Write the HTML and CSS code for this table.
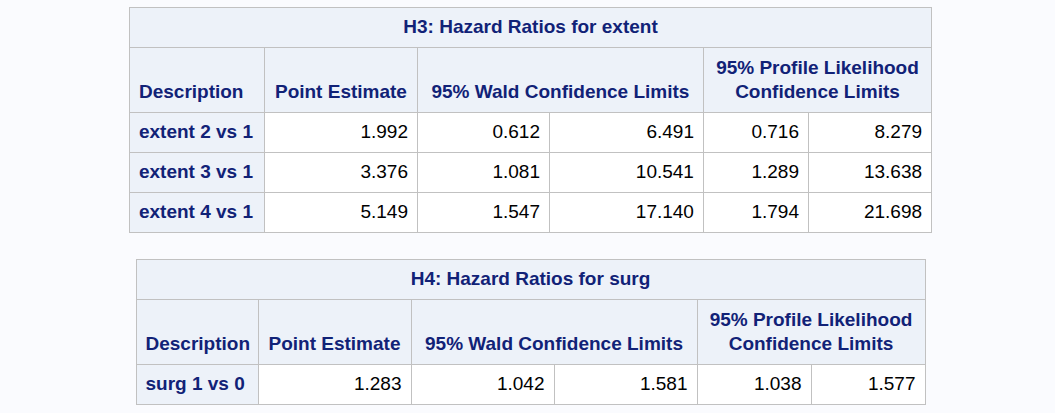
FILE: index.html
```html
<!DOCTYPE html>
<html>
<head>
<meta charset="utf-8">
<link rel="stylesheet" href="styles.css">
</head>
<body>
<div class="page">
  <table class="hr hr-extent">
    <colgroup>
      <col class="c-desc"><col class="c-pe"><col class="c-wl"><col class="c-wu"><col class="c-pl"><col class="c-pu">
    </colgroup>
    <thead>
      <tr><th class="title" colspan="6">H3: Hazard Ratios for extent</th></tr>
      <tr class="heads">
        <th class="left">Description</th>
        <th>Point Estimate</th>
        <th colspan="2">95% Wald Confidence Limits</th>
        <th colspan="2">95% Profile Likelihood<br>Confidence Limits</th>
      </tr>
    </thead>
    <tbody>
      <tr><th class="rowh">extent 2 vs 1</th><td>1.992</td><td>0.612</td><td>6.491</td><td>0.716</td><td>8.279</td></tr>
      <tr><th class="rowh">extent 3 vs 1</th><td>3.376</td><td>1.081</td><td>10.541</td><td>1.289</td><td>13.638</td></tr>
      <tr class="last"><th class="rowh">extent 4 vs 1</th><td>5.149</td><td>1.547</td><td>17.140</td><td>1.794</td><td>21.698</td></tr>
    </tbody>
  </table>

  <table class="hr hr-surg">
    <colgroup>
      <col class="c-desc"><col class="c-pe"><col class="c-wl"><col class="c-wu"><col class="c-pl"><col class="c-pu">
    </colgroup>
    <thead>
      <tr><th class="title" colspan="6">H4: Hazard Ratios for surg</th></tr>
      <tr class="heads">
        <th class="left">Description</th>
        <th>Point Estimate</th>
        <th colspan="2">95% Wald Confidence Limits</th>
        <th colspan="2">95% Profile Likelihood<br>Confidence Limits</th>
      </tr>
    </thead>
    <tbody>
      <tr><th class="rowh">surg 1 vs 0</th><td>1.283</td><td>1.042</td><td>1.581</td><td>1.038</td><td>1.577</td></tr>
    </tbody>
  </table>
</div>
</body>
</html>
```

FILE: styles.css
```css
html, body {
  margin: 0;
  padding: 0;
  background: #fafbfe;
}

.page {
  display: flex;
  flex-direction: column;
  align-items: center;
  gap: 26px;
  padding: 7px 0 0 6px;
  font-family: "Liberation Sans", Arial, sans-serif;
  font-size: 19px;
  line-height: 24px;
}

.hr {
  border-collapse: collapse;
  table-layout: fixed;
  border: 1px solid #c1c1c1;
}

.hr th,
.hr td {
  border: 1px solid #c1c1c1;
  padding: 7px 9px 8px 9px;
  white-space: nowrap;
}

.hr th {
  background: #edf2f9;
  color: #112277;
  font-weight: bold;
  text-align: center;
  vertical-align: bottom;
}

.hr .heads th {
  padding-top: 8px;
  padding-bottom: 8px;
}

.hr th.left,
.hr th.rowh {
  text-align: left;
}

.hr th.rowh {
  vertical-align: middle;
}

.hr td {
  background: #ffffff;
  color: #000000;
  text-align: right;
  vertical-align: middle;
}

.hr-extent { width: 803px; }
.hr-extent .c-desc { width: 135px; }
.hr-extent .c-pe { width: 153px; }
.hr-extent .c-wl { width: 132px; }
.hr-extent .c-wu { width: 154px; }
.hr-extent .c-pl { width: 105px; }
.hr-extent .c-pu { width: 123px; }

.hr-surg { width: 790px; }
.hr-surg .c-desc { width: 122px; }
.hr-surg .c-pe { width: 153px; }
.hr-surg .c-wl { width: 143px; }
.hr-surg .c-wu { width: 143px; }
.hr-surg .c-pl { width: 114px; }
.hr-surg .c-pu { width: 114px; }
```
